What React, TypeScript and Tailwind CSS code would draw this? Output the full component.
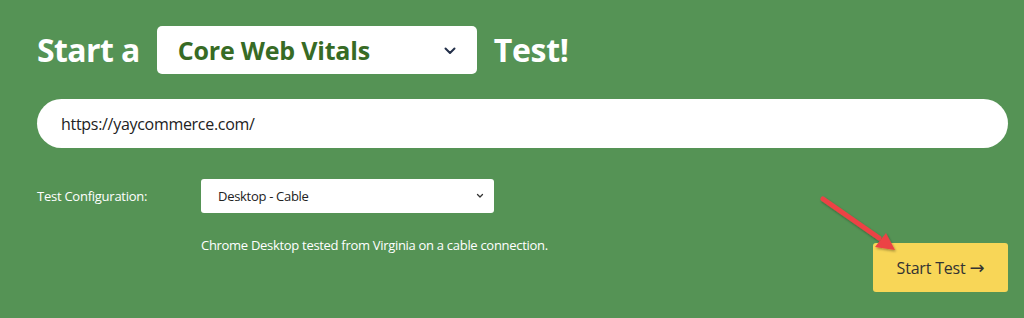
import React from "react";

export default function App() {
  return (
    <div className="relative w-full h-[318px] bg-[#559355] pl-[37px] pr-[16px] pt-[26px] overflow-hidden" style={{ fontFamily: '"Open Sans", sans-serif' }}>
      <div className="flex items-center h-[48px]">
        <span className="text-[32px] font-bold text-white leading-none tracking-[-0.6px]">Start a</span>
        <div className="ml-[17px] w-[320px] h-[48px] bg-white rounded-[5px] flex items-center pl-[21px] pr-[21px] justify-between">
          <span className="text-[25px] font-bold text-[#376b25] leading-none tracking-[-0.2px]">Core Web Vitals</span>
          <svg width="12" height="8" viewBox="0 0 12 8" className="mt-[2px]">
            <path d="M1.5 1.5 L6 6 L10.5 1.5" fill="none" stroke="#24304a" strokeWidth="2" strokeLinecap="round" strokeLinejoin="round" />
          </svg>
        </div>
        <span className="ml-[17px] text-[32px] font-bold text-white leading-none tracking-[-0.3px]">Test!</span>
      </div>
      <div className="mt-[25px] h-[49px] bg-white rounded-full flex items-center pl-[24px]">
        <span className="text-[16px] text-[#222] leading-none tracking-[-0.3px]">https://yaycommerce.com/</span>
      </div>
      <div className="mt-[31px] flex items-center">
        <span className="w-[164px] text-[13px] text-white leading-none tracking-[-0.25px]">Test Configuration:</span>
        <div className="w-[293px] h-[34px] bg-white rounded-[3px] flex items-center justify-between pl-[17px] pr-[10px]">
          <span className="text-[13px] text-[#222] leading-none tracking-[-0.3px]">Desktop - Cable</span>
          <svg width="8" height="6" viewBox="0 0 8 6">
            <path d="M1.5 1.5 L4 4 L6.5 1.5" fill="none" stroke="#333" strokeWidth="1.3" strokeLinecap="round" strokeLinejoin="round" />
          </svg>
        </div>
      </div>
      <div className="mt-[23px] flex items-start justify-between">
        <span className="ml-[164px] text-[13px] leading-[18px] text-white tracking-[-0.3px]">Chrome Desktop tested from Virginia on a cable connection.</span>
        <button className="mt-[7px] w-[135px] h-[49px] bg-[#f8d657] rounded-[3px] flex items-center justify-center text-[16px] text-[#333] leading-none tracking-[-0.2px]">
          <span>Start Test</span>
          <span className="ml-[4px] text-[18px] leading-none" style={{ fontFamily: '"DejaVu Sans", sans-serif' }}>→</span>
        </button>
      </div>
      <svg className="absolute left-[812px] top-[188px]" width="95" height="75" viewBox="0 0 95 75">
        <defs>
          <filter id="sh" x="-20%" y="-20%" width="140%" height="140%">
            <feDropShadow dx="1" dy="1.5" stdDeviation="1.2" floodColor="#000" floodOpacity="0.35" />
          </filter>
        </defs>
        <g filter="url(#sh)">
          <line x1="11" y1="11" x2="67" y2="50" stroke="#ec4244" strokeWidth="5" strokeLinecap="round" />
          <polygon points="83,62 63,59 74,45" fill="#ec4244" />
        </g>
      </svg>
    </div>
  );
}
